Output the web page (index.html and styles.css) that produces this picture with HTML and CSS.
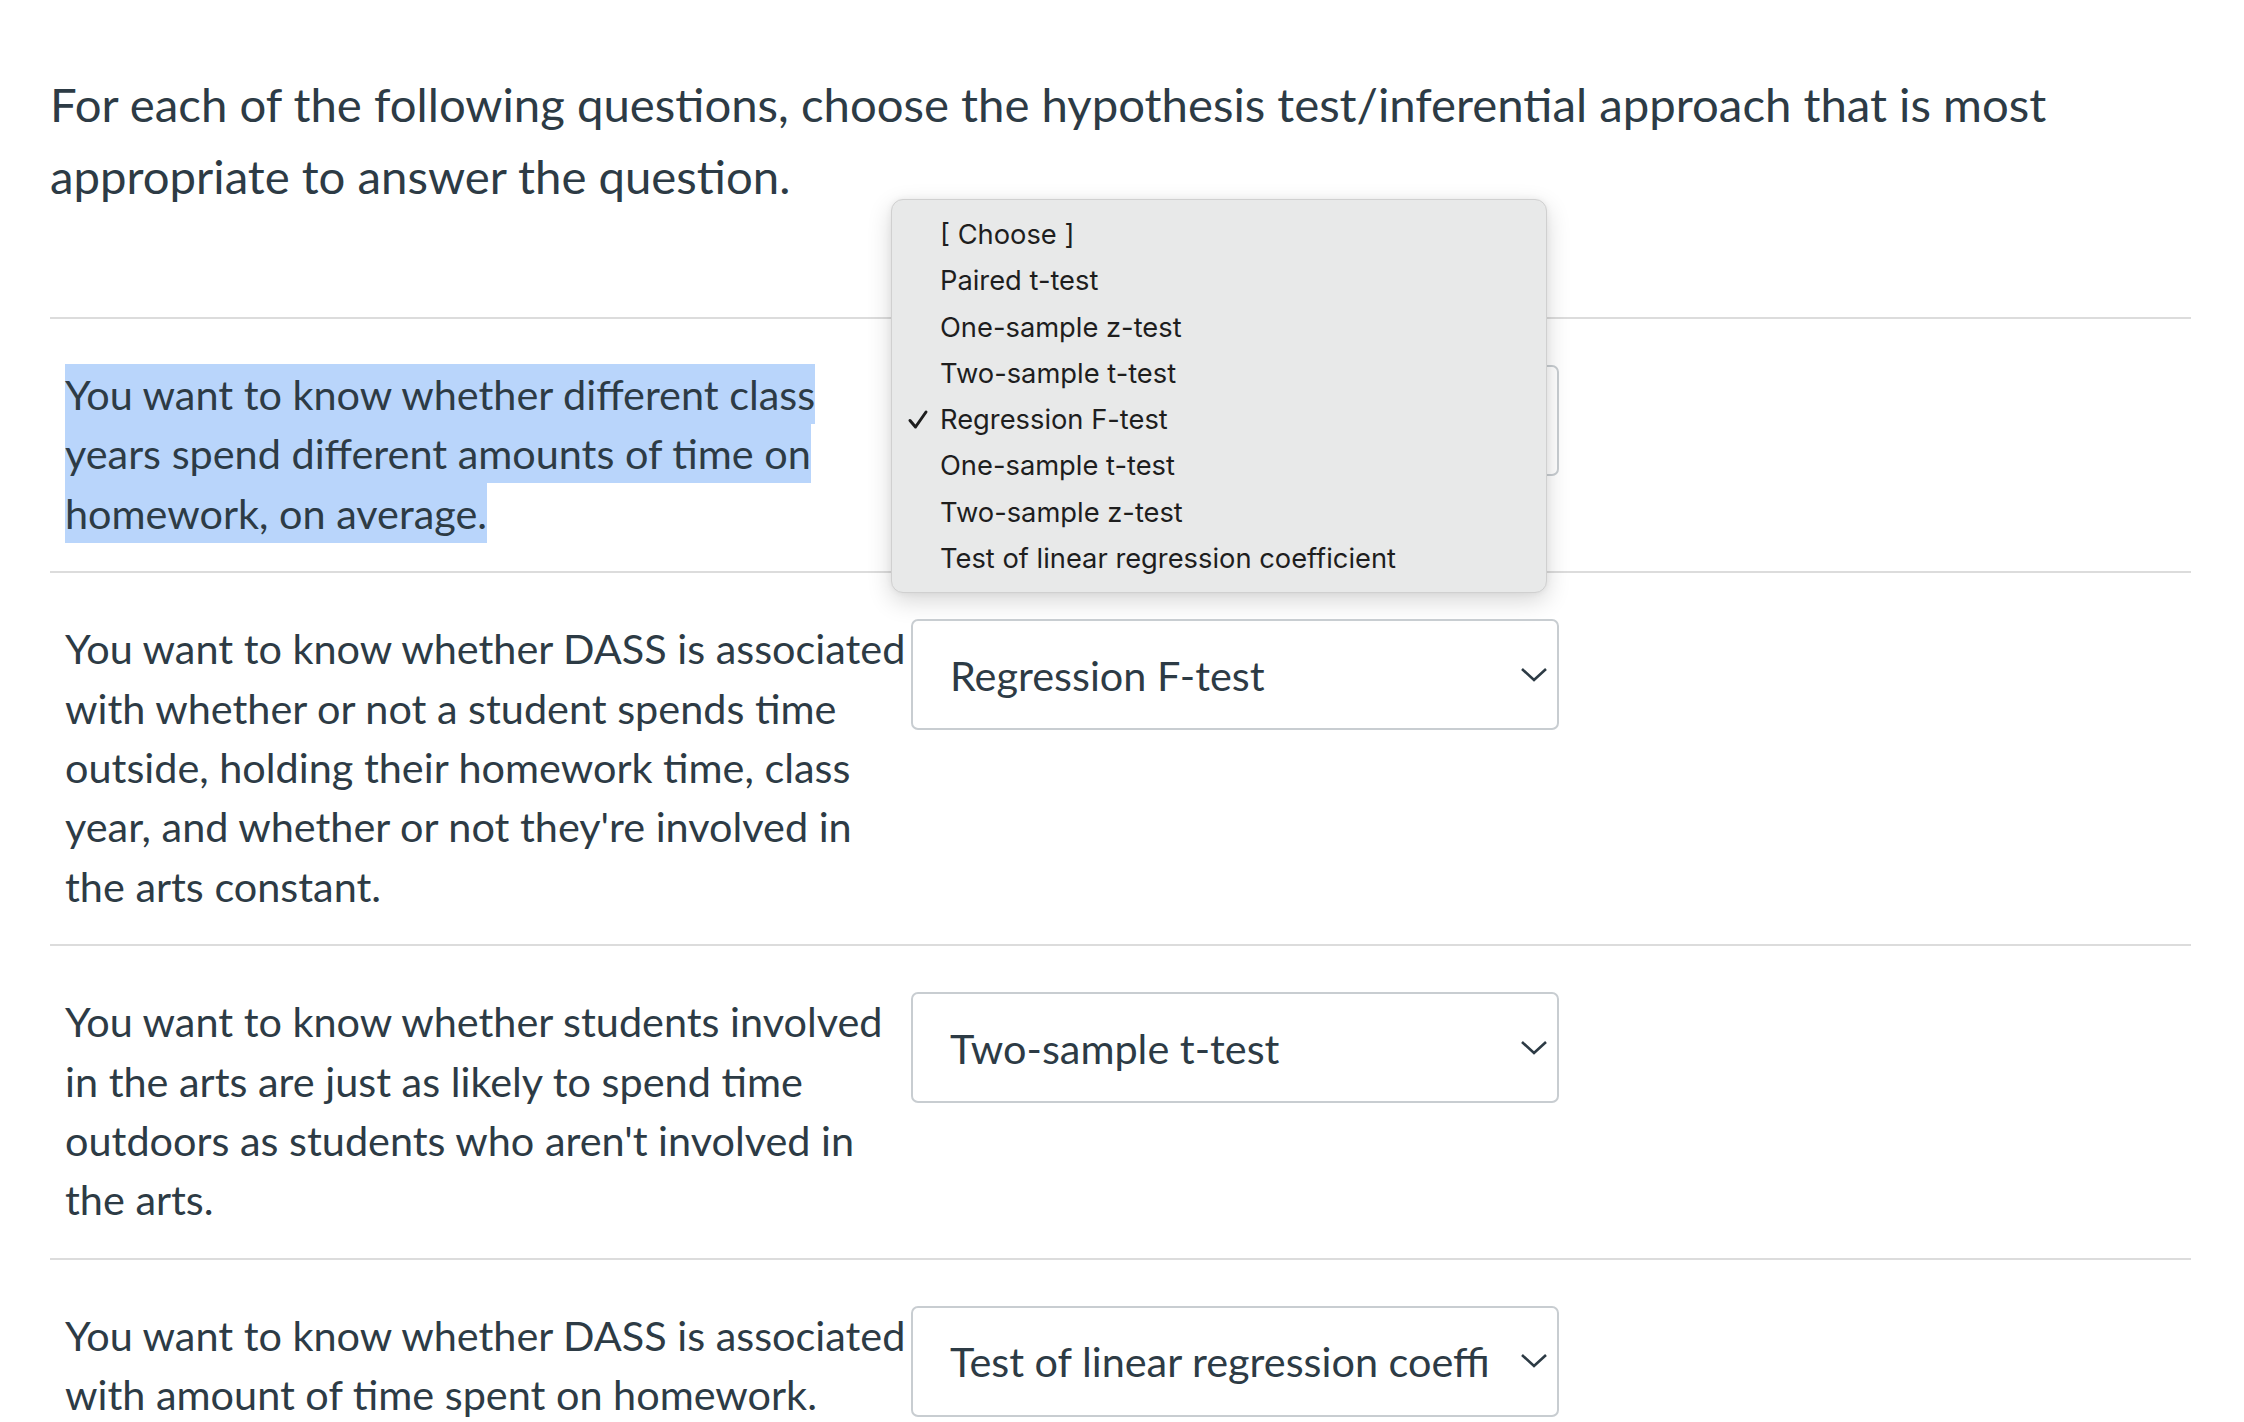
FILE: index.html
```html
<!DOCTYPE html>
<html>
<head>
<meta charset="utf-8">
<link rel="stylesheet" href="styles.css">
</head>
<body>
<div class="page">
  <p class="intro">For each of the following questions, choose the hypothesis test/inferential approach that is most appropriate to answer the question.</p>
  <div class="answers">
    <div class="row">
      <div class="q-text"><span class="sel">You want to know whether different class years spend different amounts of time on homework, on average.</span></div>
      <div class="select-wrap">
        <div class="select"><span class="value">Regression F-test</span>
          <svg class="chev" width="28" height="16" viewBox="0 0 28 16"><path d="M2 2 L14 13 L26 2" fill="none" stroke="#2d3b45" stroke-width="2.6"/></svg>
        </div>
        <div class="menu">
          <div class="item">[ Choose ]</div>
          <div class="item">Paired t-test</div>
          <div class="item">One-sample z-test</div>
          <div class="item">Two-sample t-test</div>
          <div class="item checked"><svg class="check" width="22" height="22" viewBox="0 0 22 22"><path d="M3 11.5 L8.5 18 L19 3" fill="none" stroke="#1e1e1e" stroke-width="3" stroke-linecap="round" stroke-linejoin="round"/></svg>Regression F-test</div>
          <div class="item">One-sample t-test</div>
          <div class="item">Two-sample z-test</div>
          <div class="item">Test of linear regression coefficient</div>
        </div>
      </div>
    </div>
    <div class="row">
      <div class="q-text">You want to know whether DASS is associated with whether or not a student spends time outside, holding their homework time, class year, and whether or not they're involved in the arts constant.</div>
      <div class="select-wrap">
        <div class="select"><span class="value">Regression F-test</span>
          <svg class="chev" width="28" height="16" viewBox="0 0 28 16"><path d="M2 2 L14 13 L26 2" fill="none" stroke="#2d3b45" stroke-width="2.6"/></svg>
        </div>
      </div>
    </div>
    <div class="row">
      <div class="q-text">You want to know whether students involved in the arts are just as likely to spend time outdoors as students who aren't involved in the arts.</div>
      <div class="select-wrap">
        <div class="select"><span class="value">Two-sample t-test</span>
          <svg class="chev" width="28" height="16" viewBox="0 0 28 16"><path d="M2 2 L14 13 L26 2" fill="none" stroke="#2d3b45" stroke-width="2.6"/></svg>
        </div>
      </div>
    </div>
    <div class="row">
      <div class="q-text">You want to know whether DASS is associated with amount of time spent on homework.</div>
      <div class="select-wrap">
        <div class="select"><span class="value">Test of linear regression coefficient</span>
          <svg class="chev" width="28" height="16" viewBox="0 0 28 16"><path d="M2 2 L14 13 L26 2" fill="none" stroke="#2d3b45" stroke-width="2.6"/></svg>
        </div>
      </div>
    </div>
  </div>
</div>
</body>
</html>
```
FILE: styles.css
```css
html, body {
  margin: 0;
  padding: 0;
  background: #ffffff;
}
body {
  font-family: Lato, "Noto Sans", sans-serif;
  color: #2d3b45;
  overflow: hidden;
  height: 1422px;
}
.page {
  padding: 68px 43px 0 50px;
}
.intro {
  margin: 0 0 105px 0;
  font-size: 47.3px;
  line-height: 72px;
}
.answers {
  width: 2141px;
}
.row {
  display: flex;
  align-items: flex-start;
  border-top: 2px solid #dcdcdc;
  padding: 46px 0 28px 15px;
}
.q-text {
  flex: none;
  width: 852px;
  font-size: 41.4px;
  line-height: 59.4px;
}
.sel {
  background: #b9d5fb;
  padding: 5px 0;
  -webkit-box-decoration-break: clone;
  box-decoration-break: clone;
}
.select-wrap {
  position: relative;
  margin-left: -6px;
}
.select {
  box-sizing: border-box;
  width: 648px;
  height: 111px;
  border: 2px solid #c8cdd1;
  border-radius: 7px;
  display: flex;
  align-items: center;
  padding: 0 9px 0 37px;
  font-size: 41.4px;
  white-space: nowrap;
  overflow: hidden;
}
.value {
  flex: 1;
  min-width: 0;
  overflow: hidden;
  text-overflow: clip;
}
.chev {
  flex: none;
  margin-left: 29px;
}
.menu {
  position: absolute;
  left: -20px;
  top: -166px;
  width: 656px;
  box-sizing: border-box;
  padding: 12px 0 10px 0;
  background: #e8e9e9;
  border: 1px solid #d0d0d0;
  border-radius: 12px;
  box-shadow: 0 8px 24px rgba(0,0,0,0.16), 0 0 6px rgba(0,0,0,0.06);
  font-family: Inter, "Noto Sans", sans-serif;
  font-size: 27.3px;
  color: #1e1e1e;
}
.item {
  position: relative;
  height: 46.3px;
  line-height: 46.3px;
  padding-left: 48px;
}
.check {
  position: absolute;
  left: 15px;
  top: 12px;
}
```
